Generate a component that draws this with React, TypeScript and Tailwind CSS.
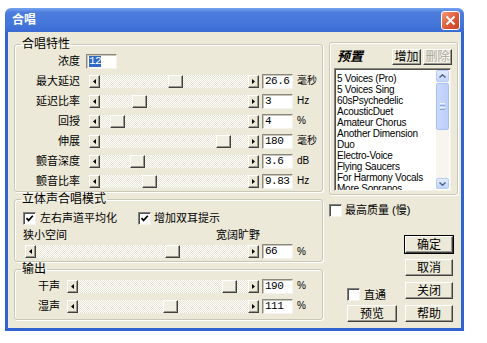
import React from "react";

const FONT = "font-['Liberation_Sans','Noto_Sans_CJK_SC',sans-serif]";

type Dir = "left" | "right";

function Arrow({ dir }: { dir: Dir }) {
  return (
    <div className="flex h-[13px] w-[11px] shrink-0 items-center justify-center border border-b-[#404040] border-l-white border-r-[#404040] border-t-white bg-[#ece9d8] shadow-[inset_-1px_-1px_0_#9a988c]">
      <svg width="3" height="5" viewBox="0 0 3 5">
        <path d={dir === "left" ? "M3 0L0 2.5L3 5Z" : "M0 0L3 2.5L0 5Z"} fill="#000" />
      </svg>
    </div>
  );
}

function Slider({ pos, className }: { pos: number; className: string }) {
  return (
    <div className={`flex h-[13px] shrink-0 ${className}`}>
      <Arrow dir="left" />
      <div className="relative flex-1 bg-[repeating-conic-gradient(#ffffff_0%_25%,#e6e3d3_0%_50%)] bg-[length:2px_2px]">
        <div
          className="absolute top-0 h-[13px] w-[15px] border border-b-[#404040] border-l-white border-r-[#404040] border-t-white bg-[#f1efe4] shadow-[inset_-1px_-1px_0_#9a988c]"
          style={{ left: pos }}
        />
      </div>
      <Arrow dir="right" />
    </div>
  );
}

function Edit({ value, selected }: { value: string; selected?: boolean }) {
  return (
    <div className="ml-[3px] flex h-[15px] w-[31px] shrink-0 items-center border border-b-[#f4f3ee] border-l-[#8a887c] border-r-[#f4f3ee] border-t-[#8a887c] bg-white pl-[2px] font-['Liberation_Mono',monospace] text-[11px] leading-none tracking-[-0.5px] shadow-[inset_1px_1px_0_#c8c6ba]">
      <span className={selected ? "bg-[#316ac5] text-white" : ""}>{value}</span>
    </div>
  );
}

function Check({ checked }: { checked?: boolean }) {
  return (
    <div className="flex h-[13px] w-[13px] shrink-0 items-center justify-center border border-b-[#f4f3ee] border-l-[#808080] border-r-[#f4f3ee] border-t-[#808080] bg-white shadow-[inset_1px_1px_0_#505050]">
      {checked && (
        <svg width="9" height="9" viewBox="0 0 9 9">
          <path d="M1.5 4.2L3.6 6.4L7.8 1.8" stroke="#000" strokeWidth="1.7" fill="none" />
        </svg>
      )}
    </div>
  );
}

function Btn({
  children,
  className,
  isDefault,
  disabled,
}: {
  children: React.ReactNode;
  className: string;
  isDefault?: boolean;
  disabled?: boolean;
}) {
  return (
    <div
      className={`flex shrink-0 items-center justify-center border border-b-[#404040] border-l-white border-r-[#404040] border-t-white bg-[#ece9d8] text-[12px] leading-none shadow-[inset_-1px_-1px_0_#9a988c] ${
        isDefault ? "ring-1 ring-black" : ""
      } ${disabled ? "text-[#a8a699] [text-shadow:1px_1px_0_#ffffff]" : "text-black"} ${className}`}
    >
      {children}
    </div>
  );
}

function Legend({ children }: { children: React.ReactNode }) {
  return <legend className="ml-[6px] px-[1px] text-[12px] leading-[14px]">{children}</legend>;
}

const groupCls =
  "rounded-[3px] border border-[#c9c7b8] shadow-[inset_1px_1px_0_#ffffff,1px_1px_0_#ffffff]";

const chorusRows = [
  { label: "最大延迟", pos: 68, value: "26.6", unit: "毫秒" },
  { label: "延迟比率", pos: 32, value: "3", unit: "Hz" },
  { label: "回授", pos: 10, value: "4", unit: "%" },
  { label: "伸展", pos: 116, value: "180", unit: "毫秒" },
  { label: "颤音深度", pos: 30, value: "3.6", unit: "dB" },
  { label: "颤音比率", pos: 42, value: "9.83", unit: "Hz" },
];

const outputRows = [
  { label: "干声", pos: 144, value: "190" },
  { label: "湿声", pos: 85, value: "111" },
];

const presets = [
  "5 Voices (Pro)",
  "5 Voices Sing",
  "60sPsychedelic",
  "AcousticDuet",
  "Amateur Chorus",
  "Another Dimension",
  "Duo",
  "Electro-Voice",
  "Flying Saucers",
  "For Harmony Vocals",
  "More Sopranos",
];

function Unit({ children }: { children: React.ReactNode }) {
  return <span className="ml-[4px] whitespace-nowrap text-[10px] leading-none">{children}</span>;
}

export default function App() {
  return (
    <div className={`h-[343px] w-[487px] bg-white pl-[5px] pt-[8px] text-black ${FONT}`}>
      <div className="flex h-[323px] w-[459px] flex-col">
        {/* 标题栏 */}
        <div className="flex h-[24px] shrink-0 items-center rounded-t-[6px] bg-[linear-gradient(to_bottom,#77a4f0_0%,#4c7ddd_18%,#4475da_70%,#3a6bd2_100%)] pl-[7px] pr-[4px]">
          <span className="text-[12px] font-bold text-white">合唱</span>
          <div className="ml-auto flex h-[19px] w-[19px] items-center justify-center rounded-[3px] border border-white bg-[linear-gradient(135deg,#f09a7c_0%,#dd5a38_55%,#c8432a_100%)]">
            <svg width="11" height="11" viewBox="0 0 11 11">
              <path d="M1.5 1.5L9.5 9.5M9.5 1.5L1.5 9.5" stroke="#fff" strokeWidth="2" />
            </svg>
          </div>
        </div>

        {/* 窗体 */}
        <div className="flex flex-1 border-x-[3px] border-b-[3px] border-[#3063cf] bg-[#ece9d8] pl-[6px] pt-[5px]">
          {/* 左列 */}
          <div className="flex w-[309px] shrink-0 flex-col">
            <fieldset className={groupCls}>
              <Legend>合唱特性</Legend>
              <div className="flex h-[20px] items-center">
                <span className="w-[65px] text-right text-[11px]">浓度</span>
                <div className="ml-[3px]">
                  <Edit value="12" selected />
                </div>
              </div>
              {chorusRows.map((r) => (
                <div key={r.label} className="flex h-[20px] items-center">
                  <span className="w-[65px] shrink-0 text-right text-[11px]">{r.label}</span>
                  <Slider pos={r.pos} className="ml-[9px] w-[170px]" />
                  <Edit value={r.value} />
                  <Unit>{r.unit}</Unit>
                </div>
              ))}
            </fieldset>

            <fieldset className={`${groupCls} pb-[2px]`}>
              <Legend>立体声合唱模式</Legend>
              <div className="mt-[4px] flex h-[16px] items-center pl-[8px] text-[11px]">
                <Check checked />
                <span className="ml-[4px]">左右声道平均化</span>
                <div className="ml-[21px]">
                  <Check checked />
                </div>
                <span className="ml-[3px]">增加双耳提示</span>
              </div>
              <div className="mt-[2px] flex h-[14px] w-[245px] items-center justify-between pl-[8px] text-[11px]">
                <span>狭小空间</span>
                <span>宽阔旷野</span>
              </div>
              <div className="mt-[2px] flex h-[15px] items-center">
                <Slider pos={129} className="ml-[10px] w-[234px]" />
                <Edit value="66" />
                <Unit>%</Unit>
              </div>
            </fieldset>

            <fieldset className={`${groupCls} pb-[3px]`}>
              <Legend>输出</Legend>
              {outputRows.map((r) => (
                <div key={r.label} className="flex h-[20px] items-center">
                  <span className="w-[45px] shrink-0 text-right text-[11px]">{r.label}</span>
                  <Slider pos={r.pos} className="ml-[7px] w-[192px]" />
                  <Edit value={r.value} />
                  <Unit>%</Unit>
                </div>
              ))}
            </fieldset>
          </div>

          {/* 右列 */}
          <div className="ml-[6px] flex w-[129px] shrink-0 flex-col">
            <div className={`mt-[5px] h-[153px] ${groupCls} rounded-[2px]`}>
              <div className="mt-[5px] flex h-[17px] items-center pl-[7px] pr-[5px]">
                <span className="text-[13px] font-bold italic leading-none">预置</span>
                <Btn className="ml-auto h-[16px] w-[29px]">增加</Btn>
                <Btn disabled className="ml-[2px] h-[16px] w-[29px]">
                  删除
                </Btn>
              </div>
              <div className="ml-[4px] mt-[3px] flex h-[123px] w-[117px] border border-b-[#f4f3ee] border-l-[#8a887c] border-r-[#f4f3ee] border-t-[#8a887c] bg-white shadow-[inset_1px_1px_0_#505050]">
                <div className="flex-1 overflow-hidden pl-[2px] pt-[4px] font-['Liberation_Sans',sans-serif] text-[10px] leading-[11px] tracking-[-0.25px]">
                  {presets.map((p) => (
                    <div key={p} className="whitespace-nowrap">
                      {p}
                    </div>
                  ))}
                </div>
                <div className="my-[1px] mr-[1px] flex w-[13px] flex-col bg-[#f6f5f0]">
                  <div className="flex h-[12px] items-center justify-center rounded-[2px] border border-[#b7cbf4] bg-[linear-gradient(to_bottom,#e3ebfe,#c2d4fb)]">
                    <svg width="7" height="4" viewBox="0 0 7 4">
                      <path d="M0.5 3.5L3.5 0.8L6.5 3.5" stroke="#4d6185" strokeWidth="1.4" fill="none" />
                    </svg>
                  </div>
                  <div className="mt-[1px] flex h-[47px] flex-col items-center justify-center gap-[1px] rounded-[2px] border border-[#a9c0f3] bg-[linear-gradient(to_right,#c9d8fc,#bccffa)]">
                    <div className="h-px w-[5px] bg-[#eef3fe]" />
                    <div className="h-px w-[5px] bg-[#8ca7e6]" />
                    <div className="h-px w-[5px] bg-[#eef3fe]" />
                    <div className="h-px w-[5px] bg-[#8ca7e6]" />
                  </div>
                  <div className="flex-1" />
                  <div className="flex h-[11px] items-center justify-center rounded-[2px] border border-[#b7cbf4] bg-[linear-gradient(to_bottom,#e3ebfe,#c2d4fb)]">
                    <svg width="7" height="4" viewBox="0 0 7 4">
                      <path d="M0.5 0.5L3.5 3.2L6.5 0.5" stroke="#4d6185" strokeWidth="1.4" fill="none" />
                    </svg>
                  </div>
                </div>
              </div>
            </div>

            <div className="mt-[8px] flex h-[14px] items-center text-[11px]">
              <Check />
              <span className="ml-[3px]">最高质量 (慢)</span>
            </div>

            <div className="mt-[19px] flex">
              <div className="ml-[18px] flex w-[50px] flex-col justify-end">
                <div className="flex items-center text-[11px]">
                  <Check />
                  <span className="ml-[4px]">直通</span>
                </div>
                <Btn className="mt-[2px] h-[17px] w-[50px]">预览</Btn>
              </div>
              <div className="ml-[8px] flex w-[48px] flex-col gap-[6px]">
                <Btn isDefault className="h-[17px] w-[48px]">
                  确定
                </Btn>
                <Btn className="h-[17px] w-[48px]">取消</Btn>
                <Btn className="h-[17px] w-[48px]">关闭</Btn>
                <Btn className="h-[17px] w-[48px]">帮助</Btn>
              </div>
            </div>
          </div>
        </div>
      </div>
    </div>
  );
}
